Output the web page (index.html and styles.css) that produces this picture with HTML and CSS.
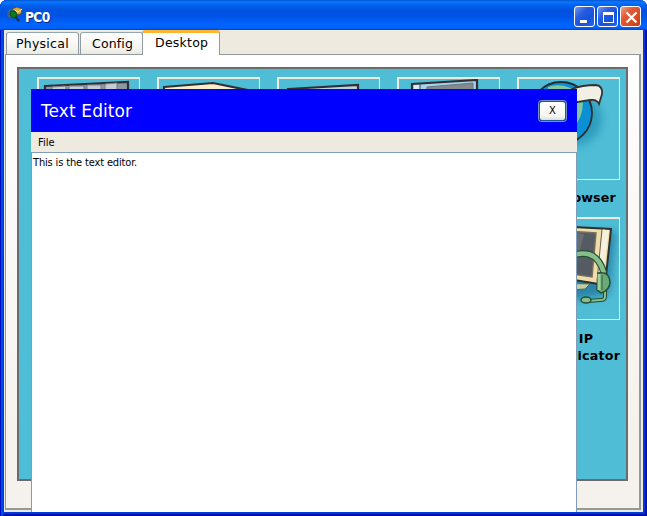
FILE: index.html
```html
<!DOCTYPE html>
<html lang="en">
<head>
<meta charset="utf-8">
<title>PC0</title>
<link rel="stylesheet" href="styles.css">
</head>
<body>
<div class="window">
  <header class="titlebar">
    <svg class="app-icon" width="16" height="17" viewBox="0 0 16 17">
      <path d="M5 2l5-2 5 2-1 5-6 1z" fill="#dba92e" stroke="#5a4513" stroke-width=".7"/>
      <path d="M7 3l4 2 4-3" fill="none" stroke="#fff2a4"/>
      <circle cx="5" cy="7" r="4.2" fill="#2c6988" stroke="#53616e"/>
      <path d="M4 4l5 1 1 5-5 1-2-4z" fill="#087b20" stroke="#11401a" stroke-width=".8"/>
      <path d="M8 10l4 4" stroke="#122c55" stroke-width="2"/>
    </svg>
    <h1 class="title">PC0</h1>
    <div class="controls">
      <button class="control" aria-label="Minimize"><svg width="21" height="21" viewBox="0 0 21 21"><path d="M5 13h7v3H5z" fill="#fff"/></svg></button>
      <button class="control" aria-label="Maximize"><svg width="21" height="21" viewBox="0 0 21 21"><path d="M5 5h11v11H5zM6 8v7h9V8z" fill="#fff" fill-rule="evenodd"/></svg></button>
      <button class="control control-close" aria-label="Close"><svg width="21" height="21" viewBox="0 0 21 21"><path d="M5.5 5.5l10 10m0-10l-10 10" stroke="#fff" stroke-width="2.3"/></svg></button>
    </div>
  </header>
  <div class="client">
    <nav class="tabs">
      <div class="tab tab-physical"><span>Physical</span></div>
      <div class="tab tab-config"><span>Config</span></div>
      <div class="tab tab-active"><span>Desktop</span></div>
    </nav>
    <main class="pane">
      <div class="desktop">
        <div class="tile"><svg class="picture" viewBox="0 0 99 99"><path d="M5 7l83-4v22H5z" fill="#8d98a3" stroke="#302f32" stroke-width="2.2"/><path d="M12 8l14-1v10H12zM29 7h15v10H29zM47 6h14v10H47zM65 5l12-1v12H65z" fill="#c6ccd6" stroke="#777c86"/></svg></div>
        <div class="tile"><svg class="picture" viewBox="0 0 99 99"><path d="M4 8l49-4 34 7v20H4z" fill="#f9edc9" stroke="#302f32" stroke-width="2.2"/></svg></div>
        <div class="tile"><svg class="picture" viewBox="0 0 99 99"><path d="M8 10l70-4v21H8z" fill="#bed1df" stroke="#302f32" stroke-width="2.2"/></svg></div>
        <div class="tile"><svg class="picture" viewBox="0 0 99 99"><path d="M12 5l65-4v25H12z" fill="#a5d3ef" stroke="#302f32" stroke-width="2.2"/><path d="M14 6h5v10h-5z" fill="#dce9f2"/><path d="M20 5v15" stroke="#464c51"/><path d="M27 8l46-4v20H25z" fill="#858b8b" stroke="#687681"/></svg></div>
        <div class="tile"><svg class="picture" viewBox="0 0 99 99">
          <ellipse class="soft" cx="53" cy="40" rx="29" ry="27" fill="#1688ae" opacity=".6"/>
          <circle cx="41" cy="34" r="31" fill="#0b90d5" stroke="#252d31" stroke-width="1.8"/>
          <path d="M28 8q16-6 34 8 3 16-5 28l-8 12-20-4z" fill="#83c99e"/>
          <path d="M52 10q10-4 24-4 7 1 6 9l-3 10q-2-5-9-4l-18 3z" fill="#f0f0e7" stroke="#353331" stroke-width="1.8"/>
        </svg></div>
        <div class="tile second-row"><svg class="picture" viewBox="0 0 99 99">
          <path class="soft" d="M20 18l76-6-7 64-58 8z" fill="#17668e" opacity=".65"/>
          <path d="M15 6l76 4-6 56-68-11z" fill="#f2dca8" stroke="#2e302f" stroke-width="2"/>
          <path d="M86 11l-7 52" stroke="#f6f1df" stroke-width="6"/>
          <path d="M82 10l-5 52" stroke="#69624e"/>
          <path d="M18 10l58 4-4 44-54-8z" fill="#555b60" stroke="#777061" stroke-width="1.5"/>
          <path d="M40 12l24 3-8 31-18-3z" fill="#696e72"/>
          <path d="M35 64l35 1-5 5-15 1z" fill="#c0cda8" stroke="#56694e"/>
          <path d="M42 41q33-18 42 13" fill="none" stroke="#244c37" stroke-width="7"/>
          <path d="M42 41q33-18 42 13" fill="none" stroke="#86bf87" stroke-width="4.5"/>
          <path d="M85 71v7q0 3-5 3l-12 1" fill="none" stroke="#244c37" stroke-width="4"/>
          <path d="M85 71v7q0 3-5 3l-12 1" fill="none" stroke="#86bf87" stroke-width="2"/>
          <path d="M78 54q11-2 12 9 0 8-9 11l-4-3z" fill="#69aa75" stroke="#244c37" stroke-width="1.5"/>
          <path d="M79 55v16" stroke="#a1d198" stroke-width="3"/>
          <path d="M82 56v15" stroke="#365d3d"/>
          <ellipse cx="66" cy="81" rx="5" ry="3" fill="#86bf87" stroke="#244c37" stroke-width="1.5"/>
        </svg></div>
        <p class="label browser-label">Web Browser</p>
        <p class="label phone-label"><span class="label-top">Cisco IP</span>Communicator</p>
      </div>
    </main>
  </div>
  <section class="editor">
    <header class="editor-head"><h2>Text Editor</h2><button class="editor-close">X</button></header>
    <nav class="menu"><span>File</span></nav>
    <div class="document"><span>This is the text editor.</span></div>
  </section>
</div>
</body>
</html>
```
FILE: styles.css
```css
* { box-sizing: border-box; }
body { margin: 0; background: #fff; font-family: "DejaVu Sans", sans-serif; color: #000; overflow: hidden; }
h1, h2, p { margin: 0; font-weight: normal; }
button { padding: 0; }
.window {
  position: relative; width: 647px; height: 516px; overflow: hidden;
  border-radius: 7px 7px 0 0;
  background: #0039df;
  padding: 0 4px 4px;
  box-shadow: inset 1px 0 #0012bf, inset 3px 0 #0048ed, inset -2px -2px #0010a5;
}
.titlebar {
  height: 30px; margin: 0 -4px; padding: 0 6px 0 7px;
  display: flex; align-items: center;
  background: linear-gradient(#0755ca 0, #0878ff 2px, #0062ef 5px, #0053df 10px, #0054e6 17px, #0064ff 24px, #0061fa 28px, #0042cc 30px);
}
.app-icon { margin-top: 1px; }
.title { margin: 4px 0 0 2px; font: bold 13.6px/17px "DejaVu Sans Condensed", "DejaVu Sans", sans-serif; letter-spacing: -.6px; color: #fff; text-shadow: 1px 1px #0b2b89; }
.controls { display: flex; gap: 2px; margin: 3px 0 0 auto; }
.control { width: 21px; height: 21px; border: 1px solid #fff; border-radius: 3px; background: linear-gradient(135deg, #7499ee, #285ce0 35%, #1653dd 65%, #2265ed); display: grid; place-items: center; }
.control-close { background: linear-gradient(135deg, #f0a08b, #e15a36 35%, #d84b23 70%, #c33a12); }
.control svg { flex: none; }
.client { height: 482px; background: #eeeadf; padding: 0 2px 2px 1px; }
.tabs { height: 25px; display: flex; align-items: flex-end; }
.tab { border: 1px solid #919ba3; border-top-color: #91a7b4; border-bottom: 0; border-radius: 3px 3px 0 0; height: 22px; background: linear-gradient(#fff, #f4f3ee 75%, #e9e7df); font-size: 12.5px; line-height: 21px; white-space: nowrap; margin-bottom: 1px; }
.tab-physical { width: 73px; padding-left: 9px; margin-left: 1px; letter-spacing: .25px; }
.tab-config { width: 63px; padding-left: 11px; margin-left: 1px; letter-spacing: .15px; }
.tab-active { width: 78px; height: 25px; margin: 0 0 0 -1px; padding-left: 12px; letter-spacing: .25px; line-height: 19px; background: #fff; border-color: #919ba3; border-top: 3px solid #ffb52f; position: relative; z-index: 1; }
.pane { height: 456px; margin-top: -1px; border: 1px solid #919b9c; border-right-width: 2px; border-bottom-width: 2px; background: linear-gradient(#fff, #fcfaf9 30%, #f5f2ed 85%); padding: 12px 11px 0 11px; }
.desktop { width: 611px; height: 414px; border: 2px solid #6b6b6e; background: #50bdd6; padding: 8px 6px 0 18px; display: grid; grid-template-columns: repeat(5, 103px); column-gap: 17px; grid-template-rows: 103px 37px 103px 60px; }
.tile { width: 103px; height: 103px; border: 2px solid #eeeadd; border-right-width: 1px; border-bottom-width: 1px; overflow: hidden; }
.picture { display: block; width: 99px; height: 99px; margin-left: 1px; }
.soft { filter: blur(4px); }
.second-row { grid-row: 3; grid-column: 5; }
.label { grid-column: 5; font-size: 12.7px; line-height: 17px; font-weight: bold; text-align: center; margin: 0 -3px 0 -4px; letter-spacing: .1px; }
.label-top { display: block; padding-right: 5px; }
.browser-label { grid-row: 2; padding-top: 9px; white-space: nowrap; }
.phone-label { grid-row: 4; padding-top: 10px; margin-left: -6px; letter-spacing: .2px; }
.editor { position: absolute; left: 31px; top: 89px; width: 546px; height: 423px; display: flex; flex-direction: column; z-index: 2; }
.editor-head { height: 43px; display: flex; align-items: center; justify-content: space-between; padding: 0 11px 0 10px; background: #00f; color: #fff; }
.editor-head h2 { font-size: 17px; line-height: 24px; letter-spacing: .1px; margin-top: 1px; }
.editor-close { width: 27px; height: 20px; border: 1px solid #175d97; border-radius: 3px; background: linear-gradient(#fff, #f5f5f0 80%, #dedbd0); display: grid; place-items: center; box-shadow: 0 0 0 1px #7394bc; font: 11px/12px "DejaVu Sans Condensed", "DejaVu Sans", sans-serif; color: #000; }
.menu { height: 20px; padding: 2px 7px; background: #eeeadf; font: 11px/17px "DejaVu Sans Condensed", "DejaVu Sans", sans-serif; }
.document { flex: 1; border: 1px solid #7f9db9; border-bottom: 0; background: #fff; padding: 1px 1px; font: 11px/17px "DejaVu Sans Condensed", "DejaVu Sans", sans-serif; letter-spacing: -.15px; }
```
